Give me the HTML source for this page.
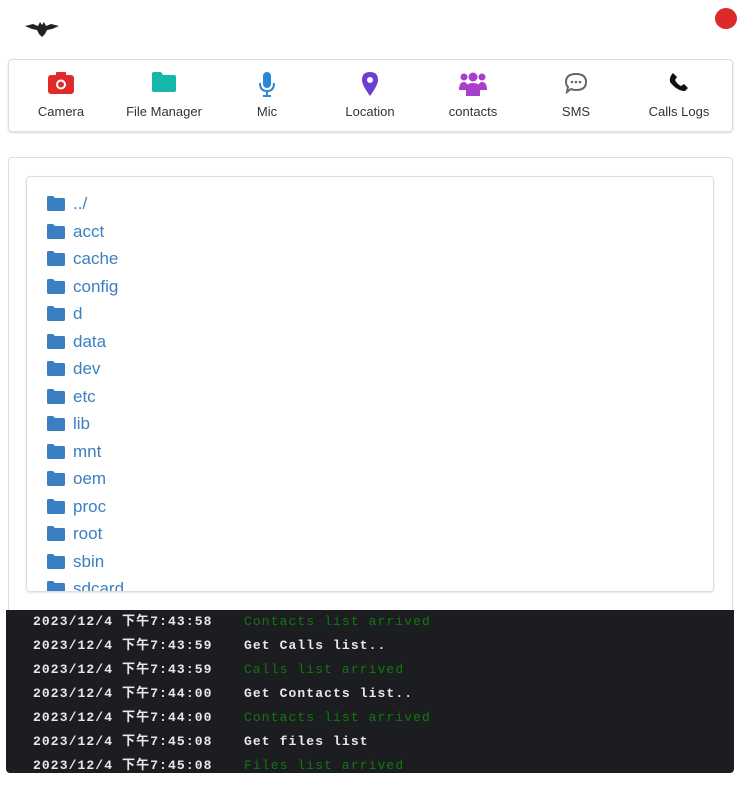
<!DOCTYPE html>
<html><head><meta charset="utf-8"><style>
body{margin:0;width:739px;height:793px;background:#fff;font-family:"Liberation Sans",sans-serif;position:relative;overflow:hidden}
.logo{position:absolute;left:25px;top:20px}
.dot{position:absolute;left:715px;top:8px;width:22px;height:21px;border-radius:50%;background:#dc2a2a}
.bar{position:absolute;left:8px;top:59px;width:723px;height:71px;border:1px solid #ddd;border-radius:4px;box-shadow:0 1px 2px rgba(0,0,0,.15)}
.it{position:absolute;top:0;width:104px;text-align:center;font-size:13px;color:#333}
.it svg{position:absolute;left:50%;transform:translateX(-50%);top:12px}
.it span{position:absolute;top:44px;left:0;right:0}
.card{position:absolute;left:8px;top:157px;width:723px;height:470px;border:1px solid #ddd;border-radius:4px}
.panel{position:absolute;left:26px;top:176px;width:686px;height:414px;border:1px solid #ddd;border-radius:4px;overflow:hidden;box-shadow:0 1px 2px rgba(0,0,0,.12)}
.f{position:absolute;left:20px;height:20px;font-size:17px;color:#3a7fc1;line-height:20px}
.f svg{position:absolute;left:0;top:2px}
.f b{font-weight:normal;position:absolute;left:26px;white-space:nowrap}
.con{position:absolute;left:6px;top:610px;width:728px;height:163px;background:#1c1d20;border-radius:0 0 4px 4px;overflow:hidden;font-family:"Liberation Mono","Noto Sans CJK SC",monospace;font-size:13px;font-weight:bold;letter-spacing:1.1px}
.l{position:absolute;left:27px;white-space:pre;color:#e8e8e8;height:20px;line-height:20px;width:700px}
.m{position:absolute;left:211px}
.g{color:#0d7a0d;font-weight:normal}
</style></head><body>
<svg class="logo" width="34" height="18" viewBox="0 0 34 18"><path d="M0 6 L8 4 L13 6 L15 2 L17 5 L19 2 L21 6 L26 4 L34 6 L27 9 L22 10 L20 14 L17 17 L14 14 L12 10 L7 9Z" fill="#222"/></svg>
<div class="dot"></div>
<div class="bar">
<div class="it" style="left:0"><svg width="26" height="22" viewBox="0 0 26 22"><rect x="0" y="3" width="26" height="19" rx="3" fill="#e02b2b"/><rect x="8" y="0" width="10" height="5" rx="1" fill="#e02b2b"/><circle cx="13" cy="12.5" r="5" fill="#fff"/><circle cx="13" cy="12.5" r="3" fill="#e02b2b"/></svg><span>Camera</span></div>
<div class="it" style="left:103px"><svg width="24" height="20" viewBox="0 0 24 20"><path d="M0 2 Q0 0 2 0 H9 L11 3 H22 Q24 3 24 5 V18 Q24 20 22 20 H2 Q0 20 0 18Z" fill="#14b8ab"/></svg><span>File Manager</span></div>
<div class="it" style="left:206px"><svg width="16" height="26" viewBox="0 0 16 26"><rect x="4" y="0" width="8" height="16" rx="4" fill="#2b88d8"/><path d="M1 11 Q1 19 8 19 Q15 19 15 11" stroke="#2b88d8" stroke-width="2" fill="none"/><path d="M8 19 V24 M4 24 H12" stroke="#2b88d8" stroke-width="2"/></svg><span>Mic</span></div>
<div class="it" style="left:309px"><svg width="16" height="24" viewBox="0 0 16 24"><path d="M8 0 Q16 0 16 8 Q16 13 8 24 Q0 13 0 8 Q0 0 8 0Z" fill="#6b3fd0"/><circle cx="8" cy="8" r="3" fill="#fff"/></svg><span>Location</span></div>
<div class="it" style="left:412px"><svg width="28" height="24" viewBox="0 0 28 24"><circle cx="5" cy="5" r="3.5" fill="#a83fcc"/><circle cx="23" cy="5" r="3.5" fill="#a83fcc"/><circle cx="14" cy="5" r="4.5" fill="#a83fcc"/><path d="M0 18 Q0 10 5 10 Q9 10 9 18Z M19 18 Q19 10 23 10 Q28 10 28 18Z M7 24 V16 Q7 11 14 11 Q21 11 21 16 V24Z" fill="#a83fcc"/></svg><span>contacts</span></div>
<div class="it" style="left:515px"><svg width="24" height="22" viewBox="0 0 24 22"><path d="M12 2 Q22 2 22 10 Q22 18 12 18 Q9 18 7 17 L3 20 L4 15 Q2 13 2 10 Q2 2 12 2Z" stroke="#666" stroke-width="2" fill="none"/><circle cx="8" cy="10" r="1.3" fill="#666"/><circle cx="12" cy="10" r="1.3" fill="#666"/><circle cx="16" cy="10" r="1.3" fill="#666"/></svg><span>SMS</span></div>
<div class="it" style="left:618px"><svg width="20" height="20" viewBox="0 0 20 20"><path d="M4 1 L8 5 L6 8 Q8 12 12 14 L15 12 L19 16 L16 19 Q8 19 1 10 Q0 5 4 1Z" fill="#111"/></svg><span>Calls Logs</span></div>
</div>
<div class="card"></div>
<div class="panel">
<div class="f" style="top:17px"><svg width="18" height="15" viewBox="0 0 18 15"><path d="M0 1.5 Q0 0 1.5 0 H6 L8 2 H16.5 Q18 2 18 3.5 V13.5 Q18 15 16.5 15 H1.5 Q0 15 0 13.5Z" fill="#3a7fc1"/></svg><b>../</b></div>
</div>
<div class="con">
<div class="l" style="top:2px">2023/12/4 下午7:43:58<span class="m g">Contacts list arrived</span></div>
<div class="l" style="top:26px">2023/12/4 下午7:43:59<span class="m">Get Calls list..</span></div>
<div class="l" style="top:50px">2023/12/4 下午7:43:59<span class="m g">Calls list arrived</span></div>
<div class="l" style="top:74px">2023/12/4 下午7:44:00<span class="m">Get Contacts list..</span></div>
<div class="l" style="top:98px">2023/12/4 下午7:44:00<span class="m g">Contacts list arrived</span></div>
<div class="l" style="top:122px">2023/12/4 下午7:45:08<span class="m">Get files list</span></div>
<div class="l" style="top:146px">2023/12/4 下午7:45:08<span class="m g">Files list arrived</span></div>
</div>
<script>
var n=["acct","cache","config","d","data","dev","etc","lib","mnt","oem","proc","root","sbin","sdcard"],p=document.querySelector('.panel'),f=p.querySelector('.f');
n.forEach(function(s,i){var c=f.cloneNode(true);c.style.top=(17+27.5*(i+1))+'px';c.querySelector('b').textContent=s;p.appendChild(c);});
</script>
</body></html>
